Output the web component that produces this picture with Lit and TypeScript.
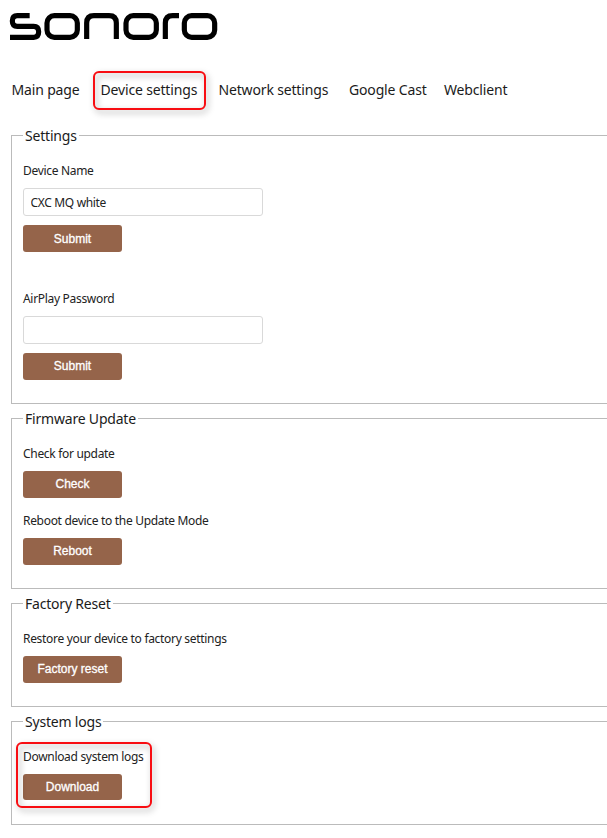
import { LitElement, html, css } from "lit";
import { customElement, property } from "lit/decorators.js";

@customElement("brand-logo")
class BrandLogo extends LitElement {
  static styles = css`
    :host { display: block; height: 60px; }
    svg { display: block; fill: none; stroke: #000; stroke-width: 15.5; }
  `;
  render() {
    return html`<svg width="230" height="60" viewBox="0 0 690 180" aria-label="sonoro">
      <path d="M89 47H52Q37 47 37 63T52 79H101Q116 79 116 95.5T101 112H30" />
      <rect x="141" y="47" width="91" height="65" rx="22" />
      <path d="M260 117V69Q260 47 282 47H327Q349 47 349 69V117" />
      <rect x="378" y="47" width="91" height="65" rx="22" />
      <path d="M496 117V69Q496 47 518 47H537" />
      <rect x="553" y="47" width="91" height="65" rx="22" />
    </svg>`;
  }
}

@customElement("settings-group")
class SettingsGroup extends LitElement {
  @property() heading = "";
  static styles = css`
    :host { display: block; }
    fieldset {
      margin: 0;
      padding: 17px 11px 23px;
      border: 1px solid #bbb;
      min-width: 0;
    }
    legend {
      padding: 0 2px;
      font-size: 14px;
      line-height: 19px;
      letter-spacing: -0.2px;
      color: #1b1b1b;
    }
  `;
  render() {
    return html`<fieldset><legend>${this.heading}</legend><slot></slot></fieldset>`;
  }
}

@customElement("app-root")
class AppRoot extends LitElement {
  static styles = css`
    :host {
      display: block;
      height: 838px;
      overflow: hidden;
      background: #fff;
      color: #222;
      font: 12px/18px "Noto Sans", sans-serif;
    }
    nav {
      display: grid;
      grid-template-columns: 89px 118px 130.5px 95px auto;
      margin-left: 11.5px;
      padding: 20px 0 26px;
      font-size: 14px;
      line-height: 20px;
      letter-spacing: -0.16px;
      color: #1b1b1b;
      white-space: nowrap;
    }
    .current { position: relative; }
    .groups {
      display: flex;
      flex-direction: column;
      gap: 5px;
      margin: 0 -12px 0 11px;
    }
    .row { position: relative; }
    .row + .row { margin-top: 14px; }
    .row.spaced { margin-top: 38px; }
    label {
      display: block;
      height: 18px;
      margin-bottom: 8px;
      letter-spacing: -0.31px;
    }
    input {
      display: block;
      box-sizing: border-box;
      width: 240px;
      height: 28px;
      margin: 0 0 9px;
      padding: 1px 6px 0 6.5px;
      border: 1px solid #d9d9d9;
      border-radius: 3px;
      font: 12px "Noto Sans", sans-serif;
      letter-spacing: -0.33px;
      color: #222;
    }
    button {
      display: block;
      width: 99px;
      height: 27px;
      padding: 0 0 2px;
      border: 0;
      border-radius: 3px;
      background: #95644a;
      color: #fff;
      font: 12px "Liberation Sans", Arial, sans-serif;
      -webkit-text-stroke: 0.3px #fff;
    }
    .first { padding: 0; }
    .short { height: 26px; margin-bottom: 1px; padding: 0; }
    .mark {
      position: absolute;
      box-sizing: border-box;
      border: 2px solid #f80d12;
      border-radius: 6px;
      filter: drop-shadow(2px 3px 3px rgba(0, 0, 0, 0.35));
      pointer-events: none;
    }
    .mark-nav { left: -8px; top: -9.5px; width: 113px; height: 39px; }
    .mark-logs { left: -7.5px; top: -6.5px; width: 136px; height: 66px; }
  `;
  render() {
    return html`
      <brand-logo></brand-logo>
      <nav>
        <span>Main page</span>
        <span class="current">Device settings<i class="mark mark-nav"></i></span>
        <span>Network settings</span>
        <span>Google Cast</span>
        <span>Webclient</span>
      </nav>
      <div class="groups">
        <settings-group heading="Settings">
          <div class="row">
            <label>Device Name</label>
            <input .value=${"CXC MQ white"} />
            <button class="first">Submit</button>
          </div>
          <div class="row spaced">
            <label>AirPlay Password</label>
            <input />
            <button>Submit</button>
          </div>
        </settings-group>
        <settings-group heading="Firmware Update">
          <div class="row"><label>Check for update</label><button>Check</button></div>
          <div class="row"><label>Reboot device to the Update Mode</label><button>Reboot</button></div>
        </settings-group>
        <settings-group heading="Factory Reset">
          <div class="row"><label>Restore your device to factory settings</label><button>Factory reset</button></div>
        </settings-group>
        <settings-group heading="System logs">
          <div class="row">
            <label>Download system logs</label>
            <button class="short">Download</button>
            <i class="mark mark-logs"></i>
          </div>
        </settings-group>
      </div>
    `;
  }
}
